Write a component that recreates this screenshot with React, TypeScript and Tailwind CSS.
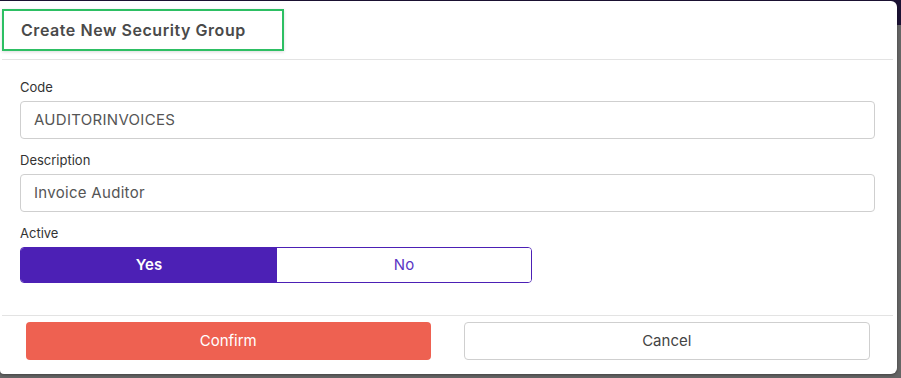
export default function App() {
  const fields = [
    { label: 'Code', value: 'AUDITORINVOICES' },
    { label: 'Description', value: 'Invoice Auditor' },
  ];

  return (
    <div
      className="w-[901px] h-[378px] overflow-hidden bg-[linear-gradient(to_bottom,#1c1234_0_25px,#656565_25px)] pt-px"
      style={{ fontFamily: 'Inter, "Noto Sans", sans-serif' }}
    >
      <div className="w-[897px] h-[373px] bg-white rounded-r-md rounded-bl-sm shadow-[0_1px_3px_rgba(0,0,0,0.35)] flex flex-col">
        {/* Header */}
        <div className="pt-2 pb-2 pl-[2px]">
          <div className="w-[282px] h-[42px] border-2 border-[#2dbf63] shadow-[0_1px_3px_rgba(0,0,0,0.15)] flex items-center pl-[17px]">
            <h2 className="text-[16px] font-semibold text-[#4a4a4a] tracking-[0.55px]">Create New Security Group</h2>
          </div>
        </div>
        <div className="ml-[2px] mr-[4px] h-px bg-[#e3e3e3]" />

        {/* Body */}
        <div className="pl-5 pr-[22px] pt-[19px] pb-[32px] flex flex-col gap-[13px]">
          {fields.map(field => (
            <div key={field.label} className="flex flex-col gap-[6px]">
              <label className="text-[13px] leading-4 text-[#333]">{field.label}</label>
              <div className="h-[38px] border border-[#cfcfcf] rounded-[4px] flex items-center px-[13px] text-[15px] text-[#555] tracking-[0.3px]">
                {field.value}
              </div>
            </div>
          ))}
          <div className="flex flex-col gap-[6px]">
            <label className="text-[13px] leading-4 text-[#333]">Active</label>
            <div className="w-[512px] h-[36px] flex rounded-[4px] border border-[#4c20b5] overflow-hidden">
              <button className="w-[256px] bg-[#4c20b5] text-white text-[15px] font-semibold">Yes</button>
              <button className="flex-1 bg-white text-[#5a35c4] text-[15px]">No</button>
            </div>
          </div>
        </div>
        <div className="ml-[2px] mr-[4px] h-px bg-[#e3e3e3]" />

        {/* Footer */}
        <div className="flex gap-[33px] pl-[26px] pr-[27px] pt-[6px]">
          <button className="flex-1 h-[38px] rounded-[4px] bg-[#ee6151] text-white text-[15px]">Confirm</button>
          <button className="flex-1 h-[38px] rounded-[4px] border border-[#cfcfcf] bg-white text-[#444] text-[15px]">Cancel</button>
        </div>
      </div>
    </div>
  );
}
